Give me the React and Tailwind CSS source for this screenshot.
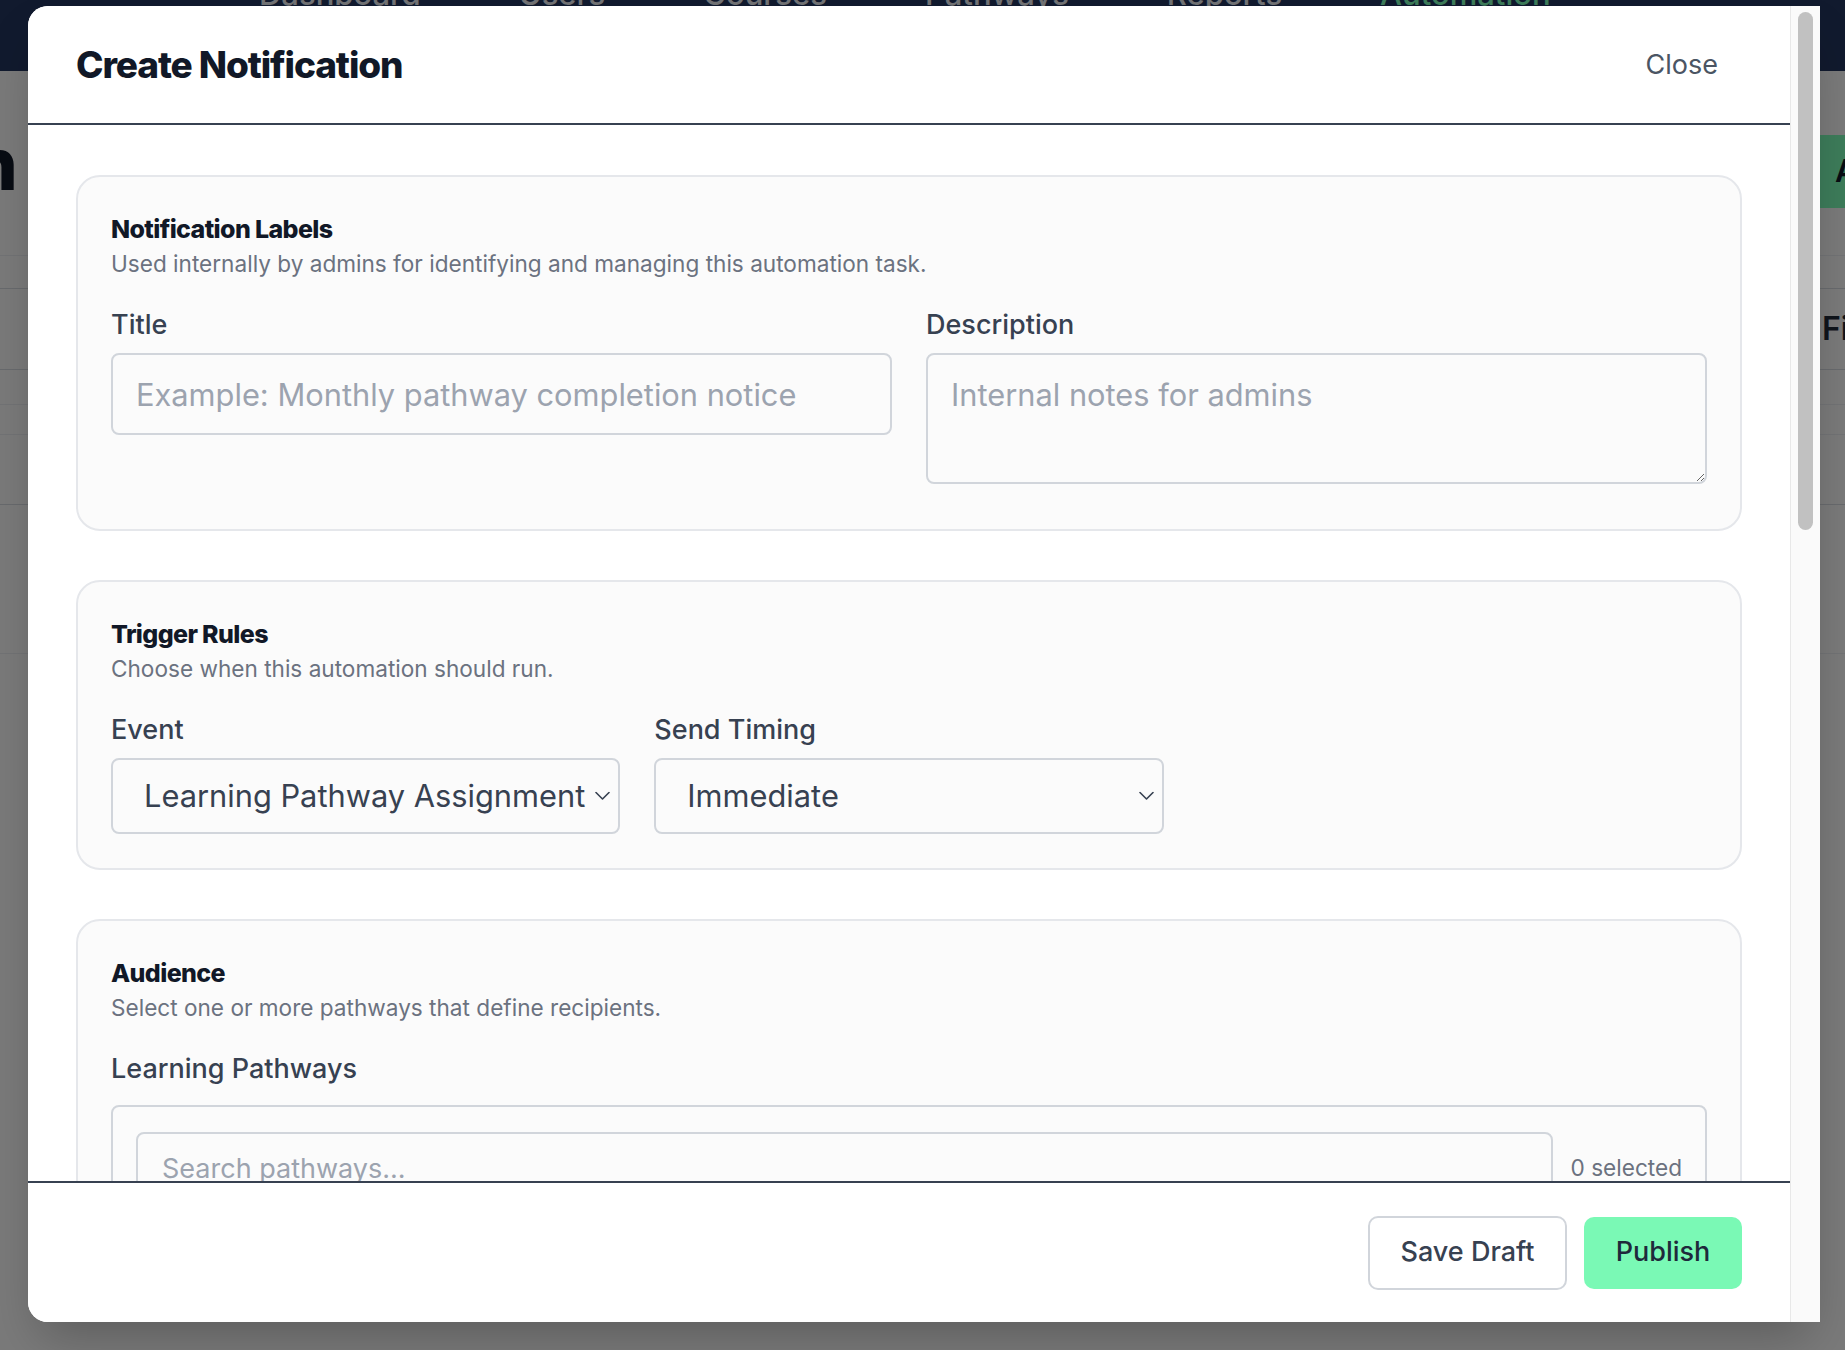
import React from "react";

function Chevron() {
  return (
    <svg
      className="pointer-events-none absolute right-[10px] top-1/2 -translate-y-1/2"
      width="15"
      height="9"
      viewBox="0 0 15 9"
      fill="none"
    >
      <path d="M1 1l6.5 6.5L14 1" stroke="#374151" strokeWidth="1.6" strokeLinecap="round" strokeLinejoin="round" />
    </svg>
  );
}

function Card({ title, subtitle, children }) {
  return (
    <section className="rounded-[24px] border-2 border-[#e5e7eb] bg-[#fbfbfb] px-[33px] pt-[34px] pb-[34px]">
      <h3 className="text-[25px] leading-[37px] font-extrabold tracking-[-0.025em] text-[#111827]">{title}</h3>
      <p className="text-[22.6px] leading-[31px] text-[#6b7280]">{subtitle}</p>
      <div className="mt-[25px]">{children}</div>
    </section>
  );
}

function Label({ children, className = "mb-[7px]" }) {
  return (
    <label className={"block text-[27px] leading-[42px] font-medium text-[#374151] " + className}>{children}</label>
  );
}

const pathways = [
  "New Hire Onboarding",
  "Compliance Essentials",
  "Leadership Foundations",
  "Customer Service Excellence",
  "Safety & Security Basics",
  "Product Knowledge",
];

export default function App() {
  return (
    <div className="relative w-[1845px] h-[1350px] overflow-hidden bg-[#f4f4f5] font-['Inter',sans-serif]">
      {/* Background page */}
      <div className="flex flex-col">
        <nav className="h-[71px] bg-[#22345c]">
          <div className="-mt-[22px] ml-[259px] flex gap-[98px] text-[31px] leading-[31px] font-medium text-[#e5e7eb] whitespace-nowrap">
            <span>Dashboard</span>
            <span>Users</span>
            <span>Courses</span>
            <span>Pathways</span>
            <span>Reports</span>
            <span className="text-[#7af9b5]">Automation</span>
          </div>
        </nav>
        <div className="h-[185px] border-b border-[#e5e7eb] flex items-start">
          <div className="w-[16px] mt-[57px] flex justify-end shrink-0">
            <h1 className="text-[72px] leading-[72px] font-extrabold tracking-tight text-[#111827] whitespace-nowrap">Automation</h1>
          </div>
          <button className="ml-[1774px] mt-[64px] h-[73px] shrink-0 rounded-[10px] bg-[#7af9b5] pl-[45px] pr-[40px] text-[31px] font-semibold text-[#111827] whitespace-nowrap">
            Add Notification
          </button>
        </div>
        <div className="h-[33px] border-b border-[#d1d5db]" />
        <div className="h-[81px] border-b border-[#d1d5db] flex items-center pl-[1822px]">
          <span className="text-[32px] font-semibold text-[#1f2937] whitespace-nowrap">Filters</span>
        </div>
        <div className="h-[35px] border-b border-[#e5e7eb]" />
        <div className="h-[30px] border-b border-[#e5e7eb]" />
        <div className="h-[70px] border-b border-[#d1d5db]" />
        <div className="h-[149px] border-b border-[#e5e7eb]" />
      </div>

      {/* Overlay + modal */}
      <div className="absolute inset-0 bg-black/50 flex items-start">
        <div className="ml-[28px] mt-[6px] w-[1792px] h-[1316px] bg-white rounded-l-[20px] shadow-2xl overflow-hidden flex">
          <div className="flex-1 min-w-0 flex flex-col">
            <header className="h-[119px] shrink-0 bg-white border-b-2 border-[#374151] px-[48px] flex items-center justify-between">
              <h2 className="text-[37px] leading-[48px] font-extrabold tracking-[-0.03em] text-[#111827]">Create Notification</h2>
              <button className="px-[24px] text-[27px] leading-[40px] text-[#4b5563]">Close</button>
            </header>

            <div className="flex-1 min-h-0 overflow-hidden px-[48px] pt-[50px] flex flex-col gap-[49px]">
              <Card
                title="Notification Labels"
                subtitle="Used internally by admins for identifying and managing this automation task."
              >
                <div className="grid grid-cols-2 gap-x-[34px] items-start">
                  <div>
                    <Label>Title</Label>
                    <input
                      className="block w-full h-[82px] rounded-lg border-2 border-[#d1d5db] bg-transparent px-[23px] text-[30.8px] text-[#374151] placeholder:text-[#9ca3af] outline-none"
                      placeholder="Example: Monthly pathway completion notice"
                    />
                  </div>
                  <div className="pb-[11px]">
                    <Label>Description</Label>
                    <textarea
                      className="block w-full h-[131px] rounded-lg border-2 border-[#d1d5db] bg-transparent px-[23px] pt-[17px] text-[30.8px] leading-[46px] text-[#374151] placeholder:text-[#9ca3af] outline-none"
                      placeholder="Internal notes for admins"
                    />
                  </div>
                </div>
              </Card>

              <Card title="Trigger Rules" subtitle="Choose when this automation should run.">
                <div className="grid grid-cols-3 gap-x-[34px]">
                  <div>
                    <Label>Event</Label>
                    <div className="relative">
                      <select className="block w-full h-[76px] appearance-none rounded-lg border-2 border-[#d1d5db] bg-transparent pl-[31px] pr-[24px] text-[30.8px] text-[#374151] outline-none">
                        <option>Learning Pathway Assignment</option>
                        <option>Learning Pathway Completion</option>
                        <option>Course Enrollment</option>
                      </select>
                      <Chevron />
                    </div>
                  </div>
                  <div>
                    <Label>Send Timing</Label>
                    <div className="relative">
                      <select className="block w-full h-[76px] appearance-none rounded-lg border-2 border-[#d1d5db] bg-transparent pl-[31px] pr-[24px] text-[30.8px] text-[#374151] outline-none">
                        <option>Immediate</option>
                        <option>Scheduled</option>
                      </select>
                      <Chevron />
                    </div>
                  </div>
                </div>
              </Card>

              <Card title="Audience" subtitle="Select one or more pathways that define recipients.">
                <Label className="mb-[15px]">Learning Pathways</Label>
                <div className="rounded-lg border-2 border-[#d1d5db] px-[23px] pt-[25px] pb-[24px]">
                  <div className="flex items-center gap-[18px]">
                    <input
                      className="flex-1 h-[72px] rounded-lg border-2 border-[#d1d5db] bg-transparent px-[24px] text-[27px] text-[#374151] placeholder:text-[#9ca3af] outline-none"
                      placeholder="Search pathways..."
                    />
                    <span className="text-[22.6px] text-[#6b7280] whitespace-nowrap">0 selected</span>
                  </div>
                  <ul className="mt-[20px] flex flex-col gap-[8px]">
                    {pathways.map((p) => (
                      <li key={p} className="flex items-center gap-[16px] rounded-lg px-[12px] py-[12px] text-[25px] text-[#374151]">
                        <span className="w-[26px] h-[26px] rounded-[6px] border-2 border-[#d1d5db] bg-white" />
                        {p}
                      </li>
                    ))}
                  </ul>
                </div>
              </Card>
            </div>

            <footer className="h-[141px] shrink-0 bg-white border-t-2 border-[#374151] px-[48px] flex items-center justify-end gap-[17px]">
              <button className="w-[199px] h-[74px] rounded-[10px] border-2 border-[#d1d5db] bg-white text-[27px] font-medium text-[#374151]">
                Save Draft
              </button>
              <button className="w-[158px] h-[72px] rounded-[10px] bg-[#7af9b5] text-[27px] font-medium text-[#1e293b]">
                Publish
              </button>
            </footer>
          </div>

          {/* scrollbar */}
          <div className="w-[30px] shrink-0 bg-[#fafafa] border-l border-[#e8e8e8] pt-[6px] pl-[7px]">
            <div className="w-[15px] h-[518px] rounded-full bg-[#c1c1c1]" />
          </div>
        </div>
      </div>
    </div>
  );
}
